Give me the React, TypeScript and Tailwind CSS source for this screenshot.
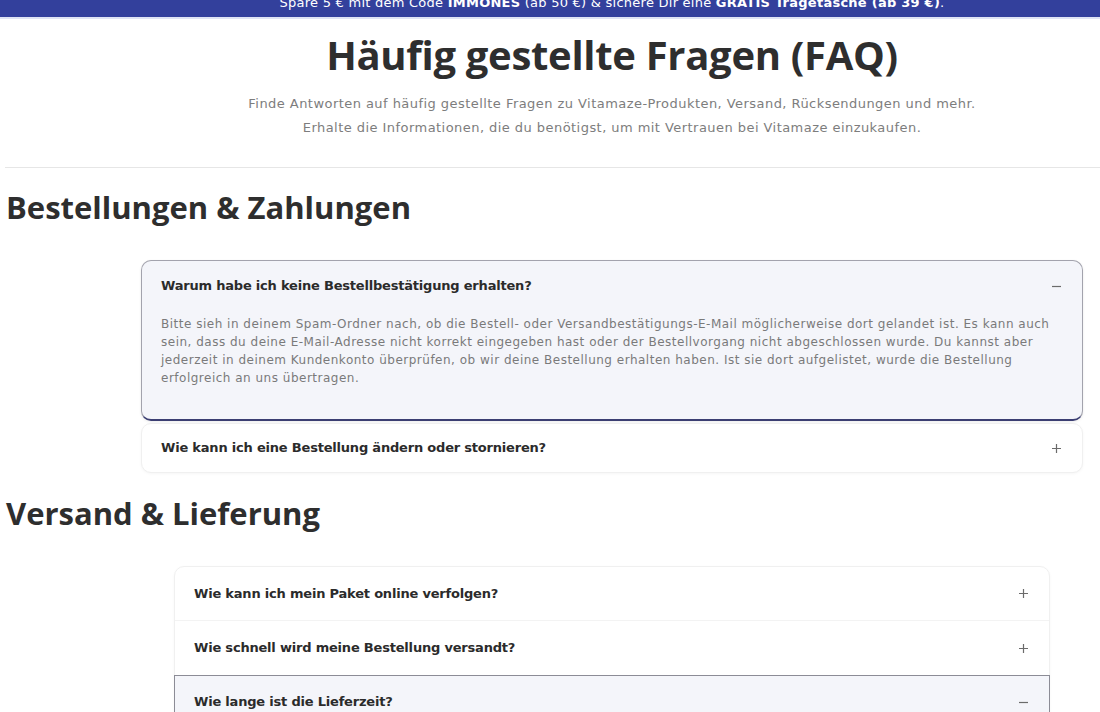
import React from "react";

const body = { fontFamily: '"DejaVu Sans", "Noto Sans", sans-serif' };
const display = { fontFamily: '"Open Sans", "DejaVu Sans", sans-serif' };

function Plus() {
  return (
    <svg width="11" height="11" viewBox="0 0 11 11" className="shrink-0">
      <path d="M5.5 1v9M1 5.5h9" stroke="#6b6b6b" strokeWidth="1.2" />
    </svg>
  );
}

function Minus() {
  return (
    <svg width="11" height="11" viewBox="0 0 11 11" className="shrink-0">
      <path d="M1 5.5h9" stroke="#6b6b6b" strokeWidth="1.2" />
    </svg>
  );
}

function Question({ children }: { children: React.ReactNode }) {
  return (
    <span className="text-[13px] leading-[20px] font-bold text-[#2b2b2b] tracking-[-0.2px]">
      {children}
    </span>
  );
}

export default function App() {
  return (
    <div className="w-[1100px] h-[712px] overflow-hidden bg-white" style={body}>
      <div className="w-[1224px]">
        {/* promo bar */}
        <div className="h-[17px] bg-[#33409c] overflow-hidden border-b-2 border-[#dfe4f4] box-content">
          <p className="-mt-[5px] text-center text-[13px] leading-[16px] text-white tracking-[0.25px]">
            Spare 5 € mit dem Code <b>IMMONES</b> (ab 50 €) &amp; sichere Dir eine{" "}
            <b>GRATIS Tragetasche (ab 39 €)</b>.
          </p>
        </div>

        {/* page header */}
        <header className="pt-[12px] text-center">
          <h1
            className="text-[40px] leading-[48px] font-bold text-[#2e2e2e] tracking-[-0.3px]"
            style={display}
          >
            Häufig gestellte Fragen (FAQ)
          </h1>
          <p className="mt-[13px] text-[13px] leading-[24px] text-[#7d7d7d] tracking-[0.45px]">
            Finde Antworten auf häufig gestellte Fragen zu Vitamaze-Produkten, Versand, Rücksendungen und mehr.
            <br />
            Erhalte die Informationen, die du benötigst, um mit Vertrauen bei Vitamaze einzukaufen.
          </p>
        </header>

        <div className="mx-[5px] mt-[27px] h-px bg-[#e6e6e6]" />

        {/* orders & payments */}
        <h2
          className="mt-[19px] px-[6px] text-[31px] leading-[40px] font-bold text-[#2e2e2e] tracking-[0px]"
          style={display}
        >
          Bestellungen &amp; Zahlungen
        </h2>

        <div className="mx-auto w-[942px] mt-[33px] flex flex-col gap-[2px]">
          <div className="rounded-[10px] border border-[#a3a3ad] border-b-2 border-b-[#3b3e72] bg-[#f4f5fa] shadow-[0_1px_3px_rgba(0,0,0,0.08)]">
            <div className="flex items-center justify-between pl-[19px] pr-[20px] pt-[15px] pb-[19px]">
              <Question>Warum habe ich keine Bestellbestätigung erhalten?</Question>
              <Minus />
            </div>
            <p className="pl-[19px] pr-[24px] pb-[32px] text-[12px] leading-[18px] text-[#7a7a7a] tracking-[0.5px]">
              Bitte sieh in deinem Spam-Ordner nach, ob die Bestell- oder Versandbestätigungs-E-Mail möglicherweise dort gelandet ist. Es kann auch sein, dass du deine E-Mail-Adresse nicht korrekt eingegeben hast oder der Bestellvorgang nicht abgeschlossen wurde. Du kannst aber jederzeit in deinem Kundenkonto überprüfen, ob wir deine Bestellung erhalten haben. Ist sie dort aufgelistet, wurde die Bestellung erfolgreich an uns übertragen.
            </p>
          </div>
          <div className="flex h-[50px] items-center justify-between rounded-[10px] border border-[#f0f0f0] bg-white pl-[19px] pr-[20px] shadow-[0_1px_3px_rgba(0,0,0,0.04)]">
            <Question>Wie kann ich eine Bestellung ändern oder stornieren?</Question>
            <Plus />
          </div>
        </div>

        {/* shipping & delivery */}
        <h2
          className="mt-[20px] px-[6px] text-[31px] leading-[40px] font-bold text-[#2e2e2e] tracking-[0px]"
          style={display}
        >
          Versand &amp; Lieferung
        </h2>

        <div className="mx-auto w-[876px] mt-[33px] rounded-t-[10px] border border-[#f0f0f0] shadow-[0_1px_3px_rgba(0,0,0,0.04)]">
          <div className="flex h-[54px] items-center justify-between pl-[19px] pr-[20px] border-b border-[#f3f3f3]">
            <Question>Wie kann ich mein Paket online verfolgen?</Question>
            <Plus />
          </div>
          <div className="flex h-[54px] items-center justify-between pl-[19px] pr-[20px]">
            <Question>Wie schnell wird meine Bestellung versandt?</Question>
            <Plus />
          </div>
          <div className="-mx-px border border-[#8c8c96] bg-[#f4f5fa]">
            <div className="flex h-[52px] items-center justify-between pl-[19px] pr-[20px]">
              <Question>Wie lange ist die Lieferzeit?</Question>
              <Minus />
            </div>
            <div className="h-[40px]" />
          </div>
        </div>
      </div>
    </div>
  );
}
